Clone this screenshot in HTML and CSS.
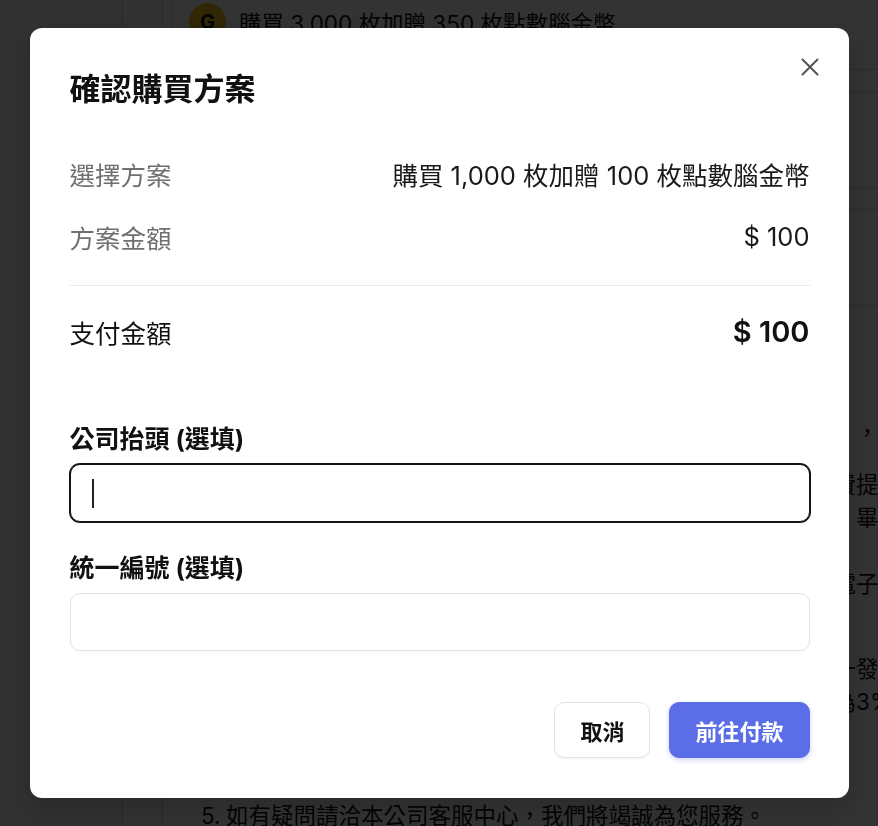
FILE: index.html
```html
<!DOCTYPE html>
<html lang="zh-TW">
<head>
    <meta charset="UTF-8">
    <meta name="viewport" content="width=device-width, initial-scale=1.0">
    <title>確認購買方案</title>
    <link rel="stylesheet" href="styles.css">
</head>
<body>
    <div class="page">
        <aside class="sidebar"></aside>
        <div class="rail"></div>
        <main class="main">
            <div class="plan-list">
                <div class="plan">
                    <span class="avatar">G</span>
                    <span class="plan-name">購買 3,000 枚加贈 350 枚點數腦金幣</span>
                </div>
                <div class="plan">
                    <span class="avatar">G</span>
                    <span class="plan-name">購買 1,000 枚加贈 100 枚點數腦金幣</span>
                </div>
                <div class="plan">
                    <span class="avatar">G</span>
                    <span class="plan-name">購買 500 枚加贈 30 枚點數腦金幣</span>
                </div>
            </div>

            <h3 class="notes-title">注意事項</h3>
            <ol class="notes">
                <li>
                    <span class="num">1.</span>
                    <div class="lines">
                        <span class="line">點數腦金幣為本平台專屬之虛擬貨幣</span>
                        <span class="line">點數腦金幣購買完成後將即時存入您的會員帳戶中並可於本平　，使用各項服務</span>
                    </div>
                </li>
                <li>
                    <span class="num">2.</span>
                    <div class="lines">
                        <span class="line">如需開立發票請於付款前填寫公司抬頭及統一編號本平台將免費提供電子發票</span>
                        <span class="line">電子發票將於付款後七個工作天內寄送至您的會員信箱待作業　畢後通知</span>
                        <span class="line">，請留意信件通知</span>
                        <span class="line">若未收到發票通知信請聯繫客服人員協助補寄或至會員專區查電子發票</span>
                    </div>
                </li>
                <li>
                    <span class="num">3.</span>
                    <div class="lines">
                        <span class="line">發票開立方式說明</span>
                        <span class="line">依據財政部相關規定平台所販售之點數腦金幣將開立二聯式統一發票</span>
                        <span class="line">價格已含營業稅若需申請退款將酌收手續費作為行政處理費用為3%</span>
                    </div>
                </li>
                <li>
                    <span class="num">4.</span>
                    <div class="lines">
                        <span class="line">點數腦金幣有效期限為購買日起一年</span>
                    </div>
                </li>
                <li class="last">
                    <span class="num">5.</span>
                    <div class="lines">
                        <span class="line">如有疑問請洽本公司客服中心，我們將竭誠為您服務。</span>
                    </div>
                </li>
            </ol>
        </main>
    </div>

    <div class="overlay">
        <div class="modal">
            <button class="close" aria-label="關閉">
                <svg width="20" height="20" viewBox="0 0 20 20" fill="none" stroke="#555" stroke-width="2" stroke-linecap="round">
                    <path d="M2.5 2.5 L17.5 17.5 M17.5 2.5 L2.5 17.5"/>
                </svg>
            </button>
            <h2 class="modal-title">確認購買方案</h2>

            <div class="summary">
                <div class="row">
                    <span class="label">選擇方案</span>
                    <span class="value">購買 1,000 枚加贈 100 枚點數腦金幣</span>
                </div>
                <div class="row">
                    <span class="label">方案金額</span>
                    <span class="value">$ 100</span>
                </div>
            </div>

            <div class="row total">
                <span>支付金額</span>
                <span class="amount">$ 100</span>
            </div>

            <div class="form-group first">
                <label for="company">公司抬頭 (選填)</label>
                <div class="input-wrap">
                    <input type="text" id="company" class="input focused">
                    <span class="caret"></span>
                </div>
            </div>
            <div class="form-group">
                <label for="taxid">統一編號 (選填)</label>
                <div class="input-wrap">
                    <input type="text" id="taxid" class="input">
                </div>
            </div>

            <div class="actions">
                <button class="btn">取消</button>
                <button class="btn primary">前往付款</button>
            </div>
        </div>
    </div>
</body>
</html>
```

FILE: styles.css
```css
* {
    box-sizing: border-box;
}
body {
    margin: 0;
    height: 826px;
    overflow: hidden;
    font-family: "Inter", "Noto Sans CJK TC", sans-serif;
    background: #fff;
    color: #111;
}

/* page behind the dialog */
.page {
    display: flex;
    height: 100vh;
}
.sidebar {
    width: 123px;
    flex-shrink: 0;
    background: #f2f2f2;
    border-right: 1px solid #cfcfcf;
}
.rail {
    width: 40px;
    flex-shrink: 0;
    background: #f7f7f7;
    border-right: 1px solid #d6d6d6;
}
.main {
    flex: 1;
    min-width: 0;
    padding-left: 8px;
}
.plan-list {
    margin-top: -27px;
    margin-right: -40px;
}
.plan {
    display: flex;
    align-items: center;
    gap: 13px;
    height: 97px;
    padding: 0 17px;
    margin-bottom: 21px;
    border: 1px solid #d4d4d4;
    border-radius: 10px;
}
.avatar {
    width: 37px;
    height: 37px;
    border-radius: 50%;
    background: #f3c21b;
    display: flex;
    align-items: center;
    justify-content: center;
    font-weight: 700;
    font-size: 20px;
}
.plan-name {
    font-size: 22.5px;
    white-space: nowrap;
}
.notes-title {
    margin: 28px 0 16px 30px;
    font-size: 22px;
    line-height: 33px;
}
.notes {
    list-style: none;
    margin: 0 0 0 30px;
    padding: 0;
    font-size: 22.5px;
    line-height: 33px;
}
.notes li {
    display: flex;
    margin-bottom: 19px;
}
.notes li.last {
    margin-top: 29px;
}
.notes .num {
    width: 25px;
    flex-shrink: 0;
}
.notes .line {
    display: block;
    white-space: nowrap;
}

/* dialog */
.overlay {
    position: fixed;
    inset: 0;
    background: rgba(0, 0, 0, 0.8);
    display: flex;
    align-items: center;
    justify-content: center;
}
.modal {
    position: relative;
    width: 819px;
    background: #fff;
    border-radius: 12px;
    padding: 41px 39px 40px 40px;
    box-shadow: 0 10px 30px rgba(0, 0, 0, 0.2);
}
.close {
    position: absolute;
    top: 29px;
    right: 29px;
    width: 20px;
    height: 20px;
    padding: 0;
    border: none;
    background: none;
    cursor: pointer;
}
.close svg {
    display: block;
}
.modal-title {
    margin: 0;
    font-size: 31px;
    line-height: 40px;
    font-weight: 700;
    color: #111;
}
.summary {
    margin-top: 49px;
    padding-bottom: 28px;
    border-bottom: 1px solid #ebebeb;
    display: flex;
    flex-direction: column;
    gap: 27px;
}
.row {
    display: flex;
    justify-content: space-between;
    align-items: center;
    height: 36px;
    padding-bottom: 6px;
    font-size: 25.5px;
}
.row .label {
    color: #707070;
}
.row .value {
    color: #1a1a1a;
}
.total {
    margin-top: 30px;
    color: #111;
}
.total .amount {
    font-size: 29px;
    font-weight: 600;
}
.form-group {
    margin-top: 30px;
}
.form-group.first {
    margin-top: 71px;
}
.form-group label {
    display: block;
    font-size: 25px;
    line-height: 32px;
    font-weight: 700;
    margin-bottom: 9px;
}
.input-wrap {
    position: relative;
}
.input {
    display: block;
    width: 100%;
    height: 58px;
    padding: 0 21px;
    border: 1px solid #e4e4e4;
    border-radius: 10px;
    font-size: 22px;
    font-family: inherit;
    outline: none;
    box-shadow: 0 1px 2px rgba(0, 0, 0, 0.03);
}
.input.focused {
    border-color: #151515;
    box-shadow: 0 0 0 1px #151515;
}
.caret {
    position: absolute;
    left: 22px;
    top: 15px;
    width: 2px;
    height: 29px;
    background: #222;
}
.actions {
    margin-top: 51px;
    display: flex;
    justify-content: flex-end;
    gap: 19px;
}
.btn {
    height: 56px;
    padding: 0 25px;
    font-family: inherit;
    font-size: 22px;
    font-weight: 700;
    color: #111;
    background: #fff;
    border: 1px solid #e3e3e3;
    border-radius: 10px;
    box-shadow: 0 1px 2px rgba(0, 0, 0, 0.05);
    cursor: pointer;
}
.btn.primary {
    background: #5b6ee8;
    border-color: #5b6ee8;
    color: #fff;
    box-shadow: 0 2px 5px rgba(91, 110, 232, 0.3);
}
```
